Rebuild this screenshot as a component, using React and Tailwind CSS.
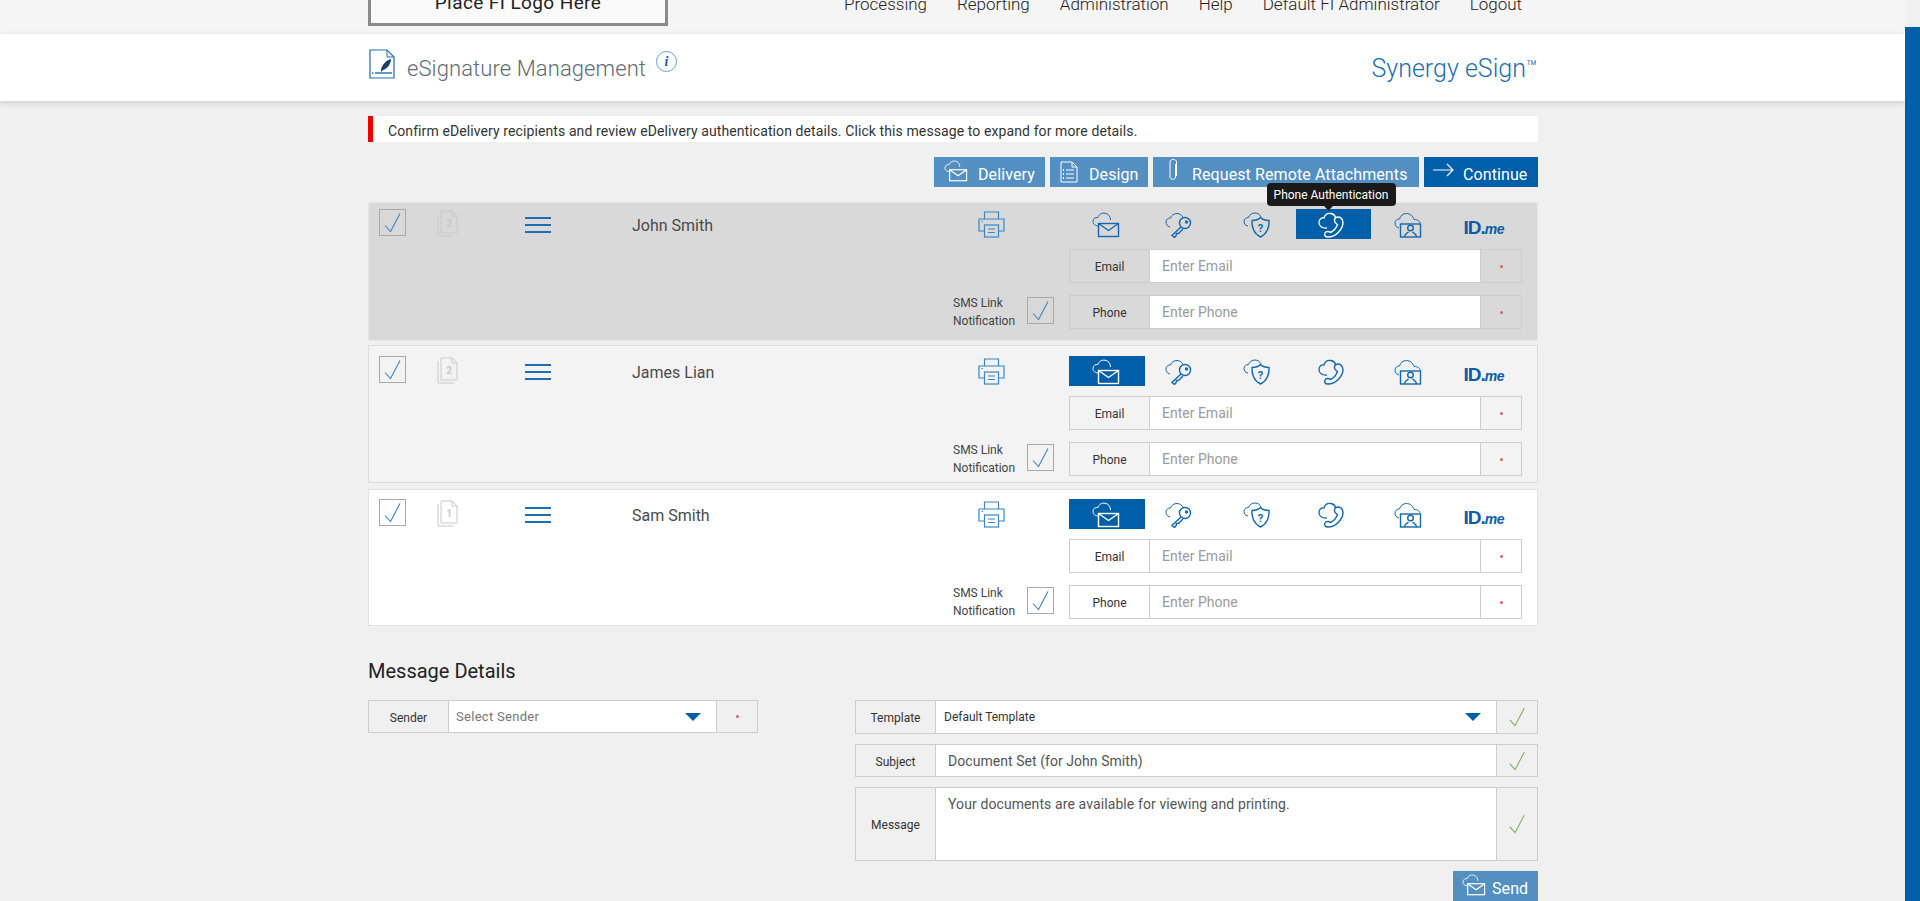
import React from 'react';

const Cloud = ({ d = 'M7 14C3 14 1 12 1 9.500C1 6.500 3.500 5 6 5.500C7 2 10 .8 13 1.200C16.500 1.800 18.500 4.500 18.500 8' }) => (
  <path d={d} strokeWidth="1" />
);

// auth method icons, all on the same 28x26 box
const AuthIcon = ({ kind, className = 'w-[28px] h-[26px]' }) => (
  <svg viewBox="0 0 28 26" fill="none" stroke="currentColor" strokeWidth="1.4" className={className}>
    {kind === 'email' && (
      <>
        <Cloud />
        <rect x="6.500" y="11.500" width="20" height="13" />
        <path d="M6.500 11.500L16.500 18.500L26.500 11.500" />
      </>
    )}
    {kind === 'key' && (
      <>
        <Cloud d="M5 15C2 14.500 1 12 1 10C1 7.500 3 6 5.500 6C6.500 3 9 1.500 12 1.500C14.500 1.500 17 3 18 5.500" />
        <circle cx="20" cy="11" r="5.500" />
        <circle cx="21.500" cy="10" r="1" />
        <path d="M16 15L7 23.500L9.500 25.500L11 24L11.500 21.500L13.500 21.500L18 17" />
      </>
    )}
    {kind === 'shield' && (
      <>
        <Cloud d="M5 14C2 13.500 1 11.500 1 9.500C1 7 3 5.500 5.500 5.500C6.500 2.500 9 1 12 1C14.500 1 17 2.500 18 5" />
        <path d="M17.500 5.500C20 8 23 8.500 26 8.500C26.500 15 24 22 17.500 25C11 22 8.500 15 9 8.500C12 8.500 15 8 17.500 5.500Z" />
        <text x="17.500" y="19.500" textAnchor="middle" fontSize="11" fontWeight="700" fill="currentColor" stroke="none" fontFamily="Roboto, sans-serif">?</text>
      </>
    )}
    {kind === 'phone' && (
      <>
        <path d="M9 16C4 16.500 1 14 1 10.500C1 7.500 3 5.500 6 6C7 2.500 10 1 13 1.500C15.500 2 17 3.500 17.500 5.500" strokeWidth="1.300" />
        <path d="M18 5.500C21.500 4 25 6.500 25 10.500C25 17 18 25 10 25C7 25 6 23 7 21C8 19 11 19 12.500 20.500C15.500 19 18.500 15.500 19.500 12.500C18 11.500 16 10.500 16.500 8C16.500 7 17 6 18 5.500Z" />
      </>
    )}
    {kind === 'person' && (
      <>
        <Cloud d="M5 16C2 15.500 1 13 1 11C1 8.500 3 7 5.500 7C6.500 3.500 9 1.500 12.500 1.500C16 1.500 19 4 20 7.500C23.500 7.500 26 9 26 11" />
        <rect x="6.500" y="12" width="20" height="13" />
        <circle cx="16.500" cy="16" r="2.800" />
        <path d="M10.500 25C10.500 21.500 13 21.500 14.500 20M22.500 25C22.500 21.500 20 21.500 18.500 20" />
      </>
    )}
  </svg>
);

const IdMe = () => (
  <span className="flex items-baseline text-[#0a5ca8] leading-none pt-[7px] pr-[1px]">
    <span className="font-['Liberation_Sans',sans-serif] font-bold text-[19px] tracking-[-1px]">ID.</span>
    <span className="font-['Liberation_Sans',sans-serif] font-bold italic text-[14px] tracking-[-0.5px]">me</span>
  </span>
);

const Check = ({ className = 'w-[25px] h-[25px] text-[#3b86c4]' }) => (
  <svg viewBox="0 0 25 25" fill="none" stroke="currentColor" strokeWidth="1.1" className={className}>
    <path d="M5 15.500L10.500 21.500L20 3.500" />
  </svg>
);

const CheckBox = () => (
  <div className="w-[27px] h-[27px] shrink-0 border border-[#a9a9a9] flex items-center justify-center">
    <Check />
  </div>
);

const DocIcon = ({ n }) => (
  <svg viewBox="0 0 22 27" fill="none" stroke="#c9c9c9" strokeWidth="1" className="w-[22px] h-[27px] shrink-0">
    <path d="M1 4V26H17" />
    <path d="M4 1H15L20 6V23H4Z" />
    <path d="M15 1V6H20" />
    <text x="12" y="17" textAnchor="middle" fontSize="10" fontWeight="700" fill="#c9c9c9" stroke="none" fontFamily="Roboto, sans-serif">{n}</text>
  </svg>
);

const Printer = () => (
  <svg viewBox="0 0 27 27" fill="none" stroke="#3b86c4" strokeWidth="1.200" className="w-[27px] h-[27px]">
    <path d="M6.500 8V1H20.500V8" />
    <path d="M6.500 20H1V8H26V20H20.500" />
    <rect x="6.500" y="14" width="14" height="12" fill="none" />
    <path d="M10 18H17M10 21.500H17" />
    <path d="M3.500 10.500H5" />
  </svg>
);

const Hamburger = () => (
  <div className="w-[26px] flex flex-col gap-[5px] shrink-0">
    <div className="h-[2px] bg-[#1c6fb4]" />
    <div className="h-[2px] bg-[#1c6fb4]" />
    <div className="h-[2px] bg-[#1c6fb4]" />
  </div>
);

const Dot = () => <span className="w-[3px] h-[3px] rounded-full bg-[#d9606a]" />;

const Triangle = () => (
  <svg viewBox="0 0 16 8" className="w-[16px] h-[8px]">
    <path d="M0 0H16L8 8Z" fill="#005fa8" />
  </svg>
);

const GreenCheck = () => <Check className="w-[24px] h-[26px] text-[#84a758]" />;

const Field = ({ label, value }) => (
  <div className="flex h-[34px] border border-[#cdcdcd]">
    <div className="w-[80px] shrink-0 flex items-center justify-center pt-[2px] text-[12px] text-[#333] border-r border-[#cdcdcd]">{label}</div>
    <div className="flex-1 bg-white flex items-center pl-[12px] pt-[1px] text-[14px] text-[#9b9b9b]">{value}</div>
    <div className="w-[41px] shrink-0 flex items-center justify-center border-l border-[#cdcdcd]">
      <Dot />
    </div>
  </div>
);

const tabs = ['email', 'key', 'shield', 'phone', 'person'];

const Recipient = ({ name, docs, selected, tooltip, className }) => (
  <div className={`flex ${className}`}>
    <div className="flex flex-1 items-start pl-[10px]">
      <CheckBox />
      <div className="ml-[31px] mt-[1px]">
        <DocIcon n={docs} />
      </div>
      <div className="ml-[66px] mt-[8px]">
        <Hamburger />
      </div>
      <div className="ml-[81px] mt-[5px] text-[16px] leading-[24px] text-[#4a4a4a]">{name}</div>
    </div>
    <div className="w-[100px] ml-[15px] flex flex-col justify-between">
      <div className="pl-[24px] pt-[2px]">
        <Printer />
      </div>
      <div className="flex items-center justify-between -ml-[1px] -mb-[1px]">
        <div className="pt-[4px] text-[12px] leading-[18px] text-[#444]">SMS Link<br />Notification</div>
        <CheckBox />
      </div>
    </div>
    <div className="w-[453px] ml-[15px] mr-[15px]">
      <div className="grid grid-cols-6 h-[30px]">
        {tabs.map((t) => (
          <div
            key={t}
            className={`relative flex items-center justify-center pt-[2px] ${t === selected ? 'bg-[#005fa8] text-white' : 'text-[#1467ae]'} ${t === 'key' ? 'pr-[6px]' : 'pr-[2px]'}`}
          >
            <AuthIcon kind={t} />
            {t === tooltip && (
              <div className="absolute left-[-29px] top-[-26px] w-[129px] h-[23px] rounded-[4px] bg-[#1a1a1a] text-white text-[12px] flex items-center justify-center z-10">
                Phone Authentication
                <span className="absolute left-[58px] bottom-[-3px] w-[7px] h-[7px] bg-[#1a1a1a] rotate-45" />
              </div>
            )}
          </div>
        ))}
        <div className="flex items-center justify-center">
          <IdMe />
        </div>
      </div>
      <div className="mt-[10px]">
        <Field label="Email" value="Enter Email" />
      </div>
      <div className="mt-[12px]">
        <Field label="Phone" value="Enter Phone" />
      </div>
    </div>
  </div>
);

const ActionButton = ({ icon, label, className = 'bg-[#5390c1]' }) => (
  <div className={`h-[30px] flex items-center text-white text-[16px] tracking-[0.1px] ${className}`}>
    {icon}
    <span className="pt-[5px]">{label}</span>
  </div>
);

const DetailRow = ({ label, children, check = true, h = 'h-[33px]' }) => (
  <div className={`flex ${h} border border-[#cdcdcd]`}>
    <div className="w-[80px] shrink-0 flex items-center justify-center pt-[2px] text-[12px] text-[#333] border-r border-[#cdcdcd]">{label}</div>
    <div className="flex-1 bg-white">{children}</div>
    <div className="w-[41px] shrink-0 flex items-center justify-center border-l border-[#cdcdcd]">
      {check ? <GreenCheck /> : <Dot />}
    </div>
  </div>
);

export default function App() {
  return (
    <div className="flex h-screen overflow-hidden bg-[#f0f0f0] font-['Roboto',sans-serif]">
      <div className="w-[1905px] shrink-0">
        {/* Top nav, page is scrolled so it is cut off */}
        <div className="h-[34px] bg-[#f5f5f5] overflow-hidden">
          <div className="w-[1170px] ml-[368px] flex justify-between">
            <div className="w-[300px] h-[27px] -mt-[1px] border-[3px] border-t-0 border-[#8a8a8a] bg-[#fafafa] flex justify-center text-[19px] tracking-[0.4px] text-[#222] overflow-hidden">
              <span className="-mt-[6px] leading-[20px]">Place FI Logo Here</span>
            </div>
            <div className="flex gap-[30px] pr-[16px] h-[10px] items-center text-[17px] font-light text-[#222] whitespace-nowrap">
              <span>Processing</span>
              <span>Reporting</span>
              <span>Administration</span>
              <span>Help</span>
              <span>Default FI Administrator</span>
              <span>Logout</span>
            </div>
          </div>
        </div>

        {/* Title band */}
        <div className="h-[67px] bg-white shadow-[0_2px_6px_rgba(0,0,0,0.15)]">
          <div className="w-[1170px] ml-[368px] flex justify-between items-start">
            <div className="flex items-start">
              <svg viewBox="0 0 26 30" fill="none" className="w-[26px] h-[30px] ml-[1px] mt-[15px]">
                <path d="M1 1H18L25 8V29H1Z" stroke="#1c6fb4" strokeWidth="1.200" />
                <path d="M18 1V8H25" stroke="#1c6fb4" strokeWidth="1" />
                <path d="M12 21C13 15 18 11 22 10C22 15 18 20 14 21L12 23Z" fill="#1c3f66" />
                <path d="M6 24H23" stroke="#1c6fb4" strokeWidth="1.400" />
                <path d="M3 24H4.500" stroke="#1c6fb4" strokeWidth="1.400" />
              </svg>
              <span className="ml-[12px] mt-[20px] text-[22px] tracking-[0.1px] leading-[30px] font-light text-[#5f6b76]">eSignature Management</span>
              <span className="ml-[10px] mt-[17px] w-[21px] h-[21px] rounded-full border border-[#5ea3d6] flex items-center justify-center font-['Liberation_Serif',serif] italic font-bold text-[14px] text-[#1c5f99]">i</span>
            </div>
            <span className="mt-[18px] pr-[1px] text-[25px] leading-[30px] font-light text-[#1c6fb4]">
              Synergy eSign<span className="text-[18px] align-[4px]">™</span>
            </span>
          </div>
        </div>

        <div className="w-[1170px] ml-[368px]">
          <div className="mt-[15px] h-[26px] bg-white border-l-[5px] border-[#ee0000] pl-[15px] pt-[4px] flex items-center text-[14px] tracking-[0.1px] text-[#333] rounded-r-[2px]">
            Confirm eDelivery recipients and review eDelivery authentication details. Click this message to expand for more details.
          </div>

          <div className="mt-[15px] flex justify-end gap-[5px]">
            <ActionButton
              className="bg-[#5390c1] w-[111px] pl-[9px] gap-[9px]"
              icon={<AuthIcon kind="email" className="w-[26px] h-[22px] -mt-[2px]" />}
              label="Delivery"
            />
            <ActionButton
              className="bg-[#5390c1] w-[98px] pl-[10px] gap-[11px]"
              icon={
                <svg viewBox="0 0 18 22" fill="none" stroke="currentColor" strokeWidth="1" className="w-[18px] h-[22px]">
                  <path d="M1 1H12L17 6V21H1Z" />
                  <path d="M12 1V6H17M6 9H14M6 13H14M6 17H14" />
                  <path d="M3 9H4M3 13H4M3 17H4" strokeWidth="2" />
                </svg>
              }
              label="Design"
            />
            <ActionButton
              className="bg-[#5390c1] w-[266px] pl-[15px] gap-[14px]"
              icon={
                <svg viewBox="0 0 10 24" fill="none" stroke="currentColor" strokeWidth="1" className="w-[10px] h-[24px] -mt-[4px]">
                  <path d="M7.500 6V19C7.500 22 2 22 2 19V4C2 .5 8.500 .5 8.500 4V18" />
                </svg>
              }
              label="Request Remote Attachments"
            />
            <ActionButton
              className="bg-[#005fa8] w-[114px] pl-[9px] gap-[9px]"
              icon={
                <svg viewBox="0 0 21 14" fill="none" stroke="currentColor" strokeWidth="1.100" className="w-[21px] h-[14px] -mt-[4px]">
                  <path d="M0 7H20M14 1L20 7L14 13" />
                </svg>
              }
              label="Continue"
            />
          </div>

          <div className="mt-[15px]">
            <Recipient
              name="John Smith"
              docs="2"
              selected="phone"
              tooltip="phone"
              className="bg-[#d9d9d9] border border-[#e6e6e6] pt-[6px] pb-[11px]"
            />
            <Recipient
              name="James Lian"
              docs="2"
              selected="email"
              className="mt-[4px] bg-[#f3f3f3] border border-[#dcdcdc] pt-[10px] pb-[6px]"
            />
            <Recipient
              name="Sam Smith"
              docs="1"
              selected="email"
              className="mt-[6px] bg-white border border-[#e2e2e2] pt-[9px] pb-[6px]"
            />
          </div>

          <h2 className="mt-[33px] text-[20px] leading-[24px] text-[#222]">Message Details</h2>

          <div className="mt-[17px] flex justify-between items-start">
            <div className="w-[390px]">
              <DetailRow label="Sender" check={false}>
                <div className="h-full flex items-center justify-between pl-[7px] pr-[15px] text-[13px] tracking-[0.3px] text-[#777]">
                  Select Sender
                  <Triangle />
                </div>
              </DetailRow>
            </div>
            <div className="w-[683px] flex flex-col gap-[10px]">
              <DetailRow label="Template" h="h-[34px]">
                <div className="h-full flex items-center justify-between pl-[8px] pr-[15px] text-[12px] text-[#333]">
                  Default Template
                  <Triangle />
                </div>
              </DetailRow>
              <DetailRow label="Subject">
                <div className="h-full flex items-center pl-[12px] pt-[1px] text-[14px] tracking-[0.05px] text-[#555]">Document Set (for John Smith)</div>
              </DetailRow>
              <DetailRow label="Message" h="h-[74px]">
                <div className="pl-[12px] pt-[6px] text-[14px] leading-[20px] tracking-[0.1px] text-[#555]">Your documents are available for viewing and printing.</div>
              </DetailRow>
              <div className="flex justify-end">
                <ActionButton
                  className="bg-[#5390c1] w-[85px] pl-[8px] gap-[5px]"
                  icon={<AuthIcon kind="email" className="w-[26px] h-[22px] -mt-[2px]" />}
                  label="Send"
                />
              </div>
            </div>
          </div>
        </div>
      </div>

      {/* Blue side rail */}
      <div className="w-[15px] mt-[27px] bg-[#005fa8]" />
    </div>
  );
}
